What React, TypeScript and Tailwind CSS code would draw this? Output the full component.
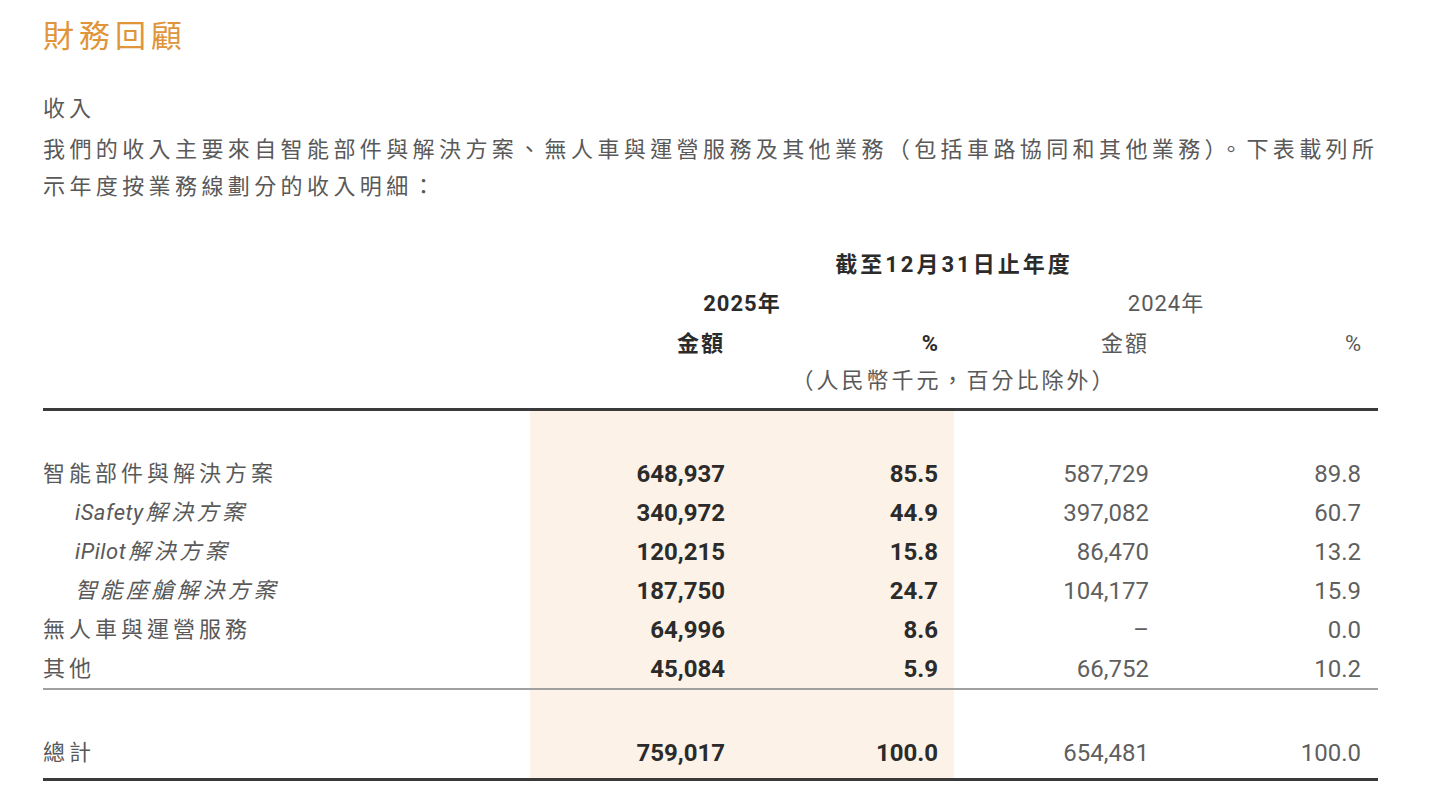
import React from 'react';

type Row = {
  latin?: string;
  label: string;
  sub?: boolean;
  a25: string;
  p25: string;
  a24: string;
  p24: string;
};

const rows: Row[] = [
  { label: '智能部件與解決方案', a25: '648,937', p25: '85.5', a24: '587,729', p24: '89.8' },
  { latin: 'iSafety', label: '解決方案', sub: true, a25: '340,972', p25: '44.9', a24: '397,082', p24: '60.7' },
  { latin: 'iPilot', label: '解決方案', sub: true, a25: '120,215', p25: '15.8', a24: '86,470', p24: '13.2' },
  { label: '智能座艙解決方案', sub: true, a25: '187,750', p25: '24.7', a24: '104,177', p24: '15.9' },
  { label: '無人車與運營服務', a25: '64,996', p25: '8.6', a24: '–', p24: '0.0' },
  { label: '其他', a25: '45,084', p25: '5.9', a24: '66,752', p24: '10.2' },
];

const grid = 'grid grid-cols-[487px_212px_212px_212px_212px]';
const hl = 'bg-[#fcf2e7]';

const Spacer = ({ h }: { h: string }) => (
  <div className={grid}>
    <div className={h} />
    <div className={`${h} ${hl}`} />
    <div className={`${h} ${hl}`} />
    <div className={h} />
    <div className={h} />
  </div>
);

const DataRow = ({ row }: { row: Row }) => (
  <div className={`${grid} h-[39px] items-stretch`}>
    <div className={`flex items-center text-[22px] ${row.sub ? 'pl-[32px] italic' : ''}`}>
      {row.latin && <span className="tracking-[0.5px] mr-[2px]">{row.latin}</span>}
      <span className={row.sub ? 'tracking-[3.5px]' : 'tracking-[4px]'}>{row.label}</span>
    </div>
    <div className={`${hl} flex items-center justify-end pr-[17px] text-[24px] font-bold text-[#2b2b2b]`}>
      {row.a25}
    </div>
    <div className={`${hl} flex items-center justify-end pr-[16px] text-[24px] font-bold text-[#2b2b2b]`}>
      {row.p25}
    </div>
    <div className="flex items-center justify-end pr-[17px] text-[24px] text-[#5f5f5f]">{row.a24}</div>
    <div className="flex items-center justify-end pr-[17px] text-[24px] text-[#5f5f5f]">{row.p24}</div>
  </div>
);

const App = () => {
  return (
    <div
      className="min-h-screen bg-white pl-[43px] pt-[17px] text-[#595959]"
      style={{ fontFamily: "Roboto, 'Noto Sans CJK TC', sans-serif" }}
    >
      <h1 className="text-[31px] leading-[40px] tracking-[5px] text-[#e0953a]">財務回顧</h1>

      <div className="mt-[33px] text-[22px] leading-[37px] tracking-[4px]">收入</div>
      <p className="mt-[4px] w-[1342px] text-[22px] leading-[37px] tracking-[4.4px]">
        我們的收入主要來自智能部件與解決方案、無人車與運營服務及其他業務（包括車路協同和其他業務）。下表載列所示年度按業務線劃分的收入明細：
      </p>

      {/* Table */}
      <div className="mt-[40px] w-[1335px]">
        <div className={grid}>
          <div />
          <div className="col-span-4 h-[39px] flex items-center justify-center text-[22px] font-bold text-[#2b2b2b] tracking-[3px]">
            截至12月31日止年度
          </div>
        </div>
        <div className={grid}>
          <div />
          <div className="col-span-2 h-[39px] flex items-center justify-center text-[22px] font-bold text-[#2b2b2b] tracking-[1px]">
            2025年
          </div>
          <div className="col-span-2 h-[39px] flex items-center justify-center text-[22px] tracking-[1px]">2024年</div>
        </div>
        <div className={`${grid} h-[40px]`}>
          <div />
          <div className="flex items-center justify-end pr-[17px] text-[22px] font-bold text-[#2b2b2b] tracking-[2px]">
            金額
          </div>
          <div className="flex items-center justify-end pr-[16px] text-[22px] font-bold text-[#2b2b2b]">%</div>
          <div className="flex items-center justify-end pr-[17px] text-[22px] tracking-[2px]">金額</div>
          <div className="flex items-center justify-end pr-[17px] text-[22px]">%</div>
        </div>
        <div className={`${grid} h-[45px]`}>
          <div />
          <div className="col-span-4 flex items-start justify-center text-[22px] leading-[36px] tracking-[3px]">
            （人民幣千元，百分比除外）
          </div>
        </div>

        <div className="border-t-[3px] border-[#3a3a3a]" />
        <Spacer h="h-[43px]" />
        {rows.map((r) => (
          <DataRow key={r.label + (r.latin ?? '')} row={r} />
        ))}

        <div className="border-t-2 border-[#a0a0a0]" />
        <Spacer h="h-[43px]" />
        <div className={`${grid} h-[39px]`}>
          <div className="flex items-center text-[22px] tracking-[4px]">總計</div>
          <div className={`${hl} flex items-center justify-end pr-[17px] text-[24px] font-bold text-[#2b2b2b]`}>
            759,017
          </div>
          <div className={`${hl} flex items-center justify-end pr-[16px] text-[24px] font-bold text-[#2b2b2b]`}>
            100.0
          </div>
          <div className="flex items-center justify-end pr-[17px] text-[24px] text-[#5f5f5f]">654,481</div>
          <div className="flex items-center justify-end pr-[17px] text-[24px] text-[#5f5f5f]">100.0</div>
        </div>
        <Spacer h="h-[6px]" />
        <div className="border-t-[3px] border-[#3a3a3a]" />
      </div>
    </div>
  );
};

export default App;
